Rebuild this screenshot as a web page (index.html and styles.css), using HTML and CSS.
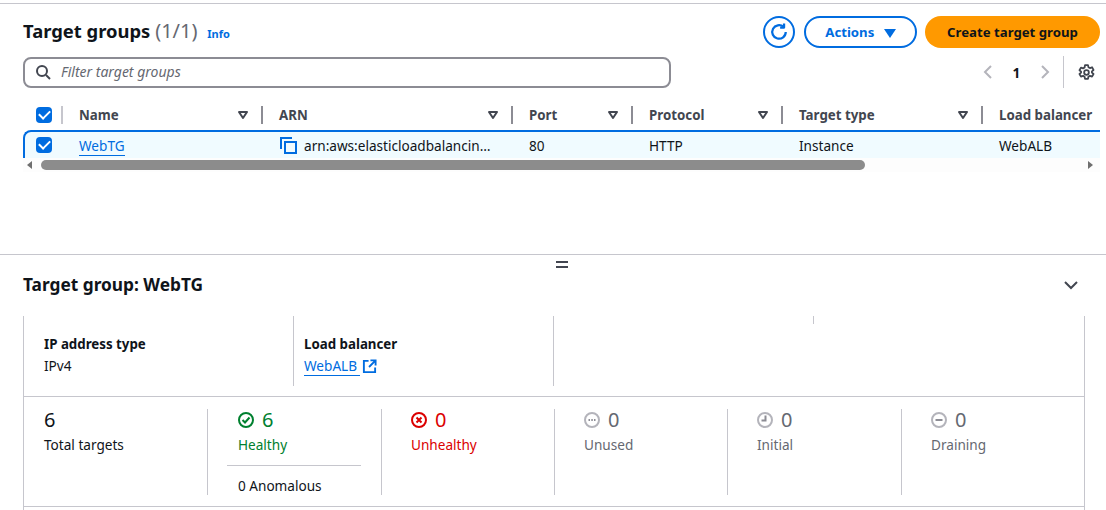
FILE: index.html
```html
<!DOCTYPE html>
<html lang="en">
<head>
    <meta charset="UTF-8">
    <title>Target groups</title>
    <link rel="stylesheet" href="styles.css">
</head>
<body>
    <section class="top-pane">
        <div class="header-row">
            <h1>Target groups <span class="count">(1/1)</span> <a class="info">Info</a></h1>
            <div class="actions">
                <button class="btn-round">
                    <svg width="18" height="18" viewBox="0 0 16 16" fill="none" stroke="#006ce0" stroke-width="2"><path d="M14 8a6 6 0 1 1-2-4.5"/><path d="M12.5 0.5v3.5h-3.5" stroke-linejoin="round"/></svg>
                </button>
                <button class="btn-outline">Actions <span class="caret"></span></button>
                <button class="btn-primary">Create target group</button>
            </div>
        </div>

        <div class="filter-row">
            <div class="filter">
                <svg width="16" height="16" viewBox="0 0 16 16" fill="none" stroke="#424650" stroke-width="2"><circle cx="7" cy="7" r="5"/><path d="M11 11l4 4"/></svg>
                <span class="filter-text">Filter target groups</span>
            </div>
            <div class="pager">
                <svg width="10" height="14" viewBox="0 0 10 14" fill="none" stroke="#b4b4bb" stroke-width="2"><path d="M8 1L2 7l6 6"/></svg>
                <span class="page-num">1</span>
                <svg width="10" height="14" viewBox="0 0 10 14" fill="none" stroke="#b4b4bb" stroke-width="2"><path d="M2 1l6 6-6 6"/></svg>
            </div>
            <div class="settings">
                <svg width="17" height="17" viewBox="0 0 16 16" fill="none" stroke="#424650" stroke-width="1.7" stroke-linejoin="round"><path d="M6.6 1h2.8l.4 2 1.4.8 2-.7 1.4 2.5-1.5 1.3v1.2l1.5 1.3-1.4 2.5-2-.7-1.4.8-.4 2H6.6l-.4-2-1.4-.8-2 .7-1.4-2.5 1.500-1.300V7.200L1.400 5.900l1.400-2.500 2 .7 1.400-.8z"/><circle cx="8" cy="8" r="2.2"/></svg>
            </div>
        </div>

        <div class="table">
            <div class="thead">
                <div class="cell cell-check"><span class="checkbox"></span></div>
                <div class="cell"><span>Name</span><svg class="sort" width="12" height="10" viewBox="0 0 12 10" fill="none" stroke="#424650" stroke-width="2" stroke-linejoin="round"><path d="M2 2h8L6 8z"/></svg></div>
                <div class="cell"><span>ARN</span><svg class="sort" width="12" height="10" viewBox="0 0 12 10" fill="none" stroke="#424650" stroke-width="2" stroke-linejoin="round"><path d="M2 2h8L6 8z"/></svg></div>
                <div class="cell"><span>Port</span><svg class="sort" width="12" height="10" viewBox="0 0 12 10" fill="none" stroke="#424650" stroke-width="2" stroke-linejoin="round"><path d="M2 2h8L6 8z"/></svg></div>
                <div class="cell"><span>Protocol</span><svg class="sort" width="12" height="10" viewBox="0 0 12 10" fill="none" stroke="#424650" stroke-width="2" stroke-linejoin="round"><path d="M2 2h8L6 8z"/></svg></div>
                <div class="cell"><span>Target type</span><svg class="sort" width="12" height="10" viewBox="0 0 12 10" fill="none" stroke="#424650" stroke-width="2" stroke-linejoin="round"><path d="M2 2h8L6 8z"/></svg></div>
                <div class="cell cell-last"><span>Load balancer</span></div>
            </div>
            <div class="trow">
                <div class="cell cell-check"><span class="checkbox"></span></div>
                <div class="cell"><a class="link">WebTG</a></div>
                <div class="cell cell-arn">
                    <svg width="17" height="17" viewBox="0 0 17 17" fill="none" stroke="#006ce0" stroke-width="2"><path d="M1 12V1h11"/><rect x="5" y="5" width="11" height="11"/></svg>
                    <span>arn:aws:elasticloadbalancin…</span>
                </div>
                <div class="cell">80</div>
                <div class="cell">HTTP</div>
                <div class="cell">Instance</div>
                <div class="cell cell-last">WebALB</div>
            </div>
            <div class="hscroll">
                <span class="arrow arrow-left"></span>
                <div class="track"><div class="thumb"></div></div>
                <span class="arrow arrow-right"></span>
            </div>
        </div>
    </section>

    <section class="bottom-pane">
        <div class="handle"></div>
        <div class="detail-head">
            <h2>Target group: WebTG</h2>
            <svg width="16" height="16" viewBox="0 0 16 16" fill="none" stroke="#424650" stroke-width="2"><path d="M2 5l6 6 6-6"/></svg>
        </div>

        <div class="detail-box">
            <div class="attrs">
                <div class="attr">
                    <strong>IP address type</strong>
                    <span>IPv4</span>
                </div>
                <div class="attr attr-lb">
                    <strong>Load balancer</strong>
                    <span><a class="link link-ext">WebALB</a>
                    <svg class="ext" width="15" height="15" viewBox="0 0 16 16" fill="none" stroke="#006ce0" stroke-width="2"><path d="M7 2H2v12h12V9"/><path d="M9 1.500h5.500V7M14.500 1.500L7.500 8.500"/></svg></span>
                </div>
                <div class="attr attr-empty"></div>
                <div class="attr-stub"></div>
            </div>

            <div class="stats">
                <div class="stat">
                    <div class="stat-num">6</div>
                    <div class="stat-label">Total targets</div>
                </div>
                <div class="stat stat-ok">
                    <div class="stat-num">
                        <svg width="16" height="16" viewBox="0 0 16 16" fill="none" stroke="#00802f" stroke-width="2"><circle cx="8" cy="8" r="7"/><path d="M4.500 8l2.500 2.500 4.500-5"/></svg>
                        6
                    </div>
                    <div class="stat-label">Healthy</div>
                    <div class="stat-extra">0 Anomalous</div>
                </div>
                <div class="stat stat-bad">
                    <div class="stat-num">
                        <svg width="16" height="16" viewBox="0 0 16 16" fill="none" stroke="#db0000" stroke-width="2"><circle cx="8" cy="8" r="7"/><path d="M5.500 5.500l5 5M10.500 5.500l-5 5"/></svg>
                        0
                    </div>
                    <div class="stat-label">Unhealthy</div>
                </div>
                <div class="stat stat-muted">
                    <div class="stat-num">
                        <svg width="16" height="16" viewBox="0 0 16 16" fill="none" stroke="#b4b4bb" stroke-width="2"><circle cx="8" cy="8" r="7"/><path d="M4.500 8h1.500M7.300 8h1.500M10 8h1.500" stroke="#8c8c94"/></svg>
                        0
                    </div>
                    <div class="stat-label">Unused</div>
                </div>
                <div class="stat stat-muted">
                    <div class="stat-num">
                        <svg width="16" height="16" viewBox="0 0 16 16" fill="none" stroke="#b4b4bb" stroke-width="2"><circle cx="8" cy="8" r="7"/><path d="M8.500 3.500V8.500H4.500" stroke="#8c8c94"/></svg>
                        0
                    </div>
                    <div class="stat-label">Initial</div>
                </div>
                <div class="stat stat-muted">
                    <div class="stat-num">
                        <svg width="16" height="16" viewBox="0 0 16 16" fill="none" stroke="#b4b4bb" stroke-width="2"><circle cx="8" cy="8" r="7"/><path d="M4.500 8h7" stroke="#8c8c94"/></svg>
                        0
                    </div>
                    <div class="stat-label">Draining</div>
                </div>
            </div>
        </div>
    </section>
</body>
</html>
```

FILE: styles.css
```css
* {
    box-sizing: border-box;
}

html, body {
    height: 510px;
    overflow: hidden;
}

body {
    margin: 0;
    padding-top: 3px;
    background: #ffffff;
    color: #0f141a;
    font-family: "Noto Sans", "Open Sans", Arial, sans-serif;
    font-size: 13.6px;
}

.top-pane {
    height: 251px;
    border-top: 1px solid #c6c6cd;
    padding: 12px 6px 0 23px;
}

.header-row {
    display: flex;
    justify-content: space-between;
    align-items: flex-start;
    height: 40px;
}

h1 {
    margin: 0;
    padding-top: 1px;
    font-size: 18.4px;
    line-height: 28px;
    font-weight: 700;
}

.count {
    color: #656871;
    font-weight: 400;
    font-size: 20px;
}

.info {
    margin-left: 5px;
    font-size: 11px;
    color: #006ce0;
    font-weight: 700;
}

.actions {
    display: flex;
    gap: 8px;
}

.actions button {
    height: 32px;
    border-radius: 16px;
    font-family: inherit;
    font-size: 13.2px;
    font-weight: 700;
    padding: 0;
}

.btn-round {
    width: 32px;
    margin-right: 1px;
    background: #fff;
    border: 2px solid #006ce0;
    display: flex;
    align-items: center;
    justify-content: center;
}

.btn-outline {
    width: 113px;
    background: #fff;
    border: 2px solid #006ce0;
    color: #006ce0;
}

.caret {
    display: inline-block;
    margin-left: 6px;
    border-left: 6px solid transparent;
    border-right: 6px solid transparent;
    border-top: 9px solid #006ce0;
    vertical-align: -1px;
}

.btn-primary {
    width: 175px;
    background: #ff9900;
    border: none;
    color: #0f141a;
}

.filter-row {
    display: flex;
    align-items: center;
    height: 32px;
}

.filter {
    width: 648px;
    height: 31px;
    border: 2px solid #8c8c94;
    border-radius: 8px;
    display: flex;
    align-items: center;
    gap: 10px;
    padding-left: 10px;
    color: #656871;
    font-size: 14px;
    font-style: italic;
}

.filter-text {
    margin-bottom: 2px;
}

.pager {
    margin-left: auto;
    display: flex;
    align-items: center;
}

.page-num {
    width: 47px;
    text-align: center;
    font-weight: 700;
}

.settings {
    margin-left: 13px;
    width: 37px;
    height: 32px;
    border-left: 1px solid #c6c6cd;
    display: flex;
    align-items: center;
    justify-content: flex-end;
    padding-right: 5px;
}

.table {
    margin-top: 12px;
    width: 1077px;
    overflow: hidden;
}

.thead, .trow {
    display: grid;
    grid-template-columns: 40px 200px 250px 120px 150px 200px 117px;
}

.trow {
    grid-template-columns: 38px 200px 250px 120px 150px 200px 117px;
}

.thead {
    height: 30px;
    color: #424650;
    font-size: 13.3px;
    font-weight: 700;
}

.thead .cell {
    border-right: 2px solid #8c8c94;
    height: 18px;
    margin-top: 6px;
    padding: 0 12px 0 16px;
    display: flex;
    align-items: center;
    justify-content: space-between;
    white-space: nowrap;
}

.thead .cell-check {
    border-right-color: #c6c6cd;
}

.thead .cell-last {
    border-right: none;
}

.cell-check {
    padding: 0 0 0 13px !important;
}

.checkbox {
    display: block;
    width: 16px;
    height: 16px;
    border-radius: 4px;
    background: #006ce0;
    position: relative;
}

.checkbox::after {
    content: "";
    position: absolute;
    left: 3px;
    top: 3px;
    width: 9px;
    height: 5px;
    border-left: 2px solid #fff;
    border-bottom: 2px solid #fff;
    transform: rotate(-45deg);
}

.trow {
    height: 28px;
    background: #f0fbff;
    border-top: 2px solid #006ce0;
    border-left: 2px solid #006ce0;
    border-top-left-radius: 8px;
}

.trow .cell {
    display: flex;
    align-items: center;
    padding-left: 16px;
    padding-top: 1px;
    height: 26px;
}

.trow .cell-check {
    padding-left: 11px !important;
}

.trow .cell-arn {
    gap: 7px;
    padding-left: 17px;
}

.link {
    color: #006ce0;
    border-bottom: 1px solid #006ce0;
}

.link-ext {
    padding-right: 3px;
}

.hscroll {
    height: 14px;
    display: flex;
    align-items: center;
    background: #fdfdfd;
    padding: 0 4px;
}

.arrow {
    width: 0;
    height: 0;
    border-top: 4px solid transparent;
    border-bottom: 4px solid transparent;
}

.arrow-left {
    border-right: 5px solid #6f6f6f;
}

.arrow-right {
    margin-left: auto;
    margin-right: 3px;
    border-left: 5px solid #6f6f6f;
}

.track {
    margin-left: 9px;
    width: 824px;
}

.thumb {
    height: 10px;
    border-radius: 5px;
    background: #8c8c8c;
}

.bottom-pane {
    border-top: 1px solid #c6c6cd;
    position: relative;
}

.handle {
    position: absolute;
    left: 556px;
    top: 6px;
    width: 12px;
    height: 7px;
    border-top: 2px solid #424650;
    border-bottom: 2px solid #424650;
}

.detail-head {
    height: 61px;
    padding: 15px 27px 0 23px;
    display: flex;
    justify-content: space-between;
    align-items: flex-start;
}

.detail-head svg {
    margin-top: 7px;
}

h2 {
    margin: 0;
    font-size: 17.3px;
    line-height: 30px;
    font-weight: 700;
}

.detail-box {
    margin-left: 23px;
    width: 1062px;
    padding-bottom: 6px;
    border-left: 1px solid #c6c6cd;
    border-right: 1px solid #c6c6cd;
}

.attrs {
    display: grid;
    grid-template-columns: 270px 260px 260px 1fr;
    height: 81px;
    border-bottom: 1px solid #c6c6cd;
}

.attr {
    height: 70px;
    padding: 19px 0 0 20px;
    border-right: 1px solid #c6c6cd;
    display: flex;
    flex-direction: column;
    gap: 4px;
    line-height: 18px;
}

.attr strong {
    font-size: 13.3px;
}

.attr-lb {
    padding-left: 10px;
}

.attr-empty {
    height: 8px;
    padding: 0;
}

.attr span {
    display: flex;
    align-items: center;
    gap: 2px;
}

.stats {
    display: grid;
    grid-template-columns: 184px 174px 173px 173px 174px 1fr;
    padding-top: 12px;
    height: 110px;
    border-bottom: 1px solid #c6c6cd;
}

.stat {
    height: 86px;
    padding-left: 29px;
    border-right: 1px solid #c6c6cd;
}

.stat:first-child {
    padding-left: 20px;
}

.stat:last-child {
    border-right: none;
}

.stat-num {
    display: flex;
    align-items: center;
    gap: 8px;
    margin-top: -1px;
    font-size: 20px;
    line-height: 24px;
}

.stat-label {
    margin-top: 3px;
    line-height: 20px;
}

.stat-ok {
    color: #00802f;
    padding-left: 30px;
}

.stat-bad {
    color: #db0000;
}

.stat-muted {
    color: #656871;
}

.stat-extra {
    margin: 10px 20px 0 -11px;
    padding: 11px 0 0 11px;
    border-top: 1px solid #c6c6cd;
    color: #0f141a;
    line-height: 18px;
}
```
